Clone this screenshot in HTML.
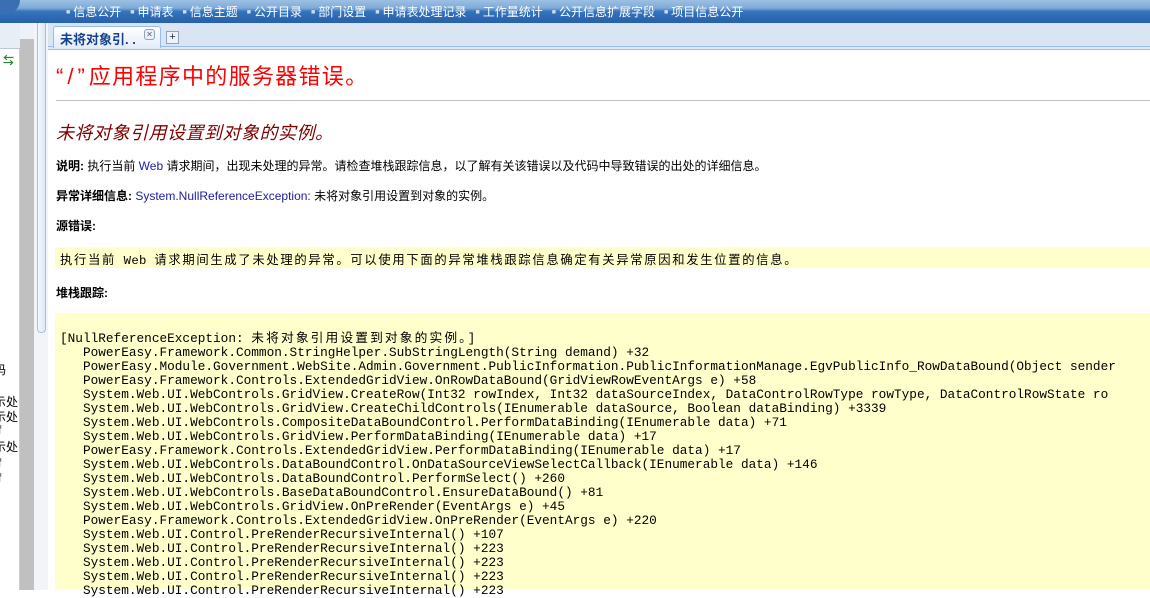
<!DOCTYPE html>
<html><head><meta charset="utf-8"><style>
*{margin:0;padding:0;box-sizing:border-box}
body{width:1150px;height:590px;overflow:hidden;background:#fff;font-family:"Liberation Sans","Noto Sans CJK SC",sans-serif;position:relative}
.top{position:absolute;left:0;top:0;width:1150px;height:23px;background:linear-gradient(#9cc0e4 0,#7eaad8 35%,#3473bd 50%,#2760ab 100%)}
.nav{position:absolute;left:66px;top:3px;color:#fff;font-size:12px;white-space:nowrap}
.nav span{margin-right:9px}
.nav b{font-weight:normal;font-size:7px;color:#cde;margin-right:3px;vertical-align:2px}
.orb{position:absolute;left:0;top:0;width:20px;height:14px;border-bottom-right-radius:20px;background:#3a6fb4}
.left{position:absolute;left:0;top:23px;width:20px;height:567px;background:#fff;border-right:1px solid #ccc}
.lhead{position:absolute;left:0;top:23px;width:20px;height:26px;background:#e8eef6;border-bottom:1px solid #b8c8dc}
.sb{position:absolute;left:20px;top:23px;width:14px;height:567px;background:#c0c0c0}
.sbtop{position:absolute;left:20px;top:23px;width:14px;height:16px;background:#eef2f8}
.sp{position:absolute;left:34px;top:23px;width:14px;height:567px;background:#f2f4f7}
.spbar{position:absolute;left:37px;top:23px;width:9px;height:310px;background:linear-gradient(90deg,#f4f8fd,#dce8f6);border:1px solid #a8c0dc;border-top:none;border-radius:0 0 4px 4px}
.tabs{position:absolute;left:48px;top:23px;width:1102px;height:24px;background:#d9e5f3;border-bottom:1px solid #99bbe8}
.tabs2{position:absolute;left:48px;top:47px;width:1102px;height:3px;background:#dfe9f6;border-bottom:1px solid #99bbe8}
.tab{position:absolute;left:53px;top:26px;width:108px;height:22px;background:linear-gradient(#fff,#e3ecf8);border:1px solid #99bbe8;border-bottom:none;border-radius:3px 3px 0 0;font-size:13px;font-weight:bold;color:#15428b;padding:2px 0 0 6px}
.x{position:absolute;left:144px;top:29px;width:11px;height:11px;border:1px solid #8aa4c4;border-radius:3px;font-size:8px;line-height:9px;text-align:center;color:#567;background:#eef}
.plus{position:absolute;left:166px;top:31px;width:13px;height:13px;border:1px solid #8aa4c4;background:#eef3fa;font-size:11px;line-height:11px;text-align:center;color:#234}
.c{position:absolute;left:56px;color:#000}
h1{position:absolute;left:56px;top:59px;font-size:22px;letter-spacing:1.3px;font-weight:normal;color:#f00;white-space:nowrap}
h1 .q{letter-spacing:4px}
.hr{position:absolute;left:56px;top:100px;width:1094px;height:1px;background:#c0c0c0}
h2{position:absolute;left:56px;top:119px;font-size:18px;letter-spacing:0.5px;font-weight:normal;font-style:italic;color:#800000;white-space:nowrap}
.p{font-size:12px;white-space:nowrap}
.p b{font-weight:bold}
.blue{color:#2020a0}
.src{position:absolute;left:55px;top:247px;width:1095px;height:21px;background:#ffffcc;font-family:"Liberation Mono","Noto Sans CJK SC",monospace;font-size:12.3px;letter-spacing:0.3px;padding:3px 0 0 5px;white-space:nowrap}
.src .cj{letter-spacing:1.7px}
.stack{position:absolute;left:55px;top:313px;width:1095px;height:277px;background:#ffffcc}
.pre{position:absolute;left:60px;top:332px;font-family:"Liberation Mono","Noto Sans CJK SC",monospace;font-size:12.75px;color:#000}
.pre div{height:14px;line-height:14px;white-space:pre}
.cj{letter-spacing:2.1px}
.ltxt{position:absolute;left:0;font-size:12px;color:#000;white-space:nowrap}
</style></head><body>
<div class="top"><div class="orb"></div>
<div class="nav"><b>■</b><span>信息公开</span><b>■</b><span>申请表</span><b>■</b><span>信息主题</span><b>■</b><span>公开目录</span><b>■</b><span>部门设置</span><b>■</b><span>申请表处理记录</span><b>■</b><span>工作量统计</span><b>■</b><span>公开信息扩展字段</span><b>■</b><span>项目信息公开</span></div></div>
<div class="left"></div><div class="lhead"></div>
<div class="ltxt" style="top:52px;left:3px;color:#2a8a2a;font-weight:bold;font-size:11px">⇆</div>
<div class="ltxt" style="top:361px;left:-6px">码</div>
<div class="ltxt" style="top:393px;left:-6px">示处</div>
<div class="ltxt" style="top:408px;left:-6px">示处</div>
<div class="ltxt" style="top:423px;left:-2px">f</div>
<div class="ltxt" style="top:438px;left:-6px">示处</div>
<div class="ltxt" style="top:456px;left:-2px">f</div>
<div class="ltxt" style="top:471px;left:-2px">f</div>
<div class="sb"></div><div class="sbtop"></div>
<div class="sp"></div><div class="spbar"></div>
<div class="tabs"></div><div class="tabs2"></div>
<div class="tab">未将对象引. .</div><div class="x">✕</div><div class="plus">+</div>
<h1><span class="q">“/”</span>应用程序中的服务器错误。</h1>
<div class="hr"></div>
<h2>未将对象引用设置到对象的实例。</h2>
<div class="c p" style="top:157px"><b>说明:</b> 执行当前 <span class="blue">Web</span> 请求期间，出现未处理的异常。请检查堆栈跟踪信息，以了解有关该错误以及代码中导致错误的出处的详细信息。</div>
<div class="c p" style="top:187px"><b>异常详细信息:</b> <span class="blue">System.NullReferenceException:</span> 未将对象引用设置到对象的实例。</div>
<div class="c p" style="top:217px"><b>源错误:</b></div>
<div class="src"><span class="cj">执行当前</span> Web <span class="cj">请求期间生成了未处理的异常。可以使用下面的异常堆栈跟踪信息确定有关异常原因和发生位置的信息。</span></div>
<div class="c p" style="top:284px"><b>堆栈跟踪:</b></div>
<div class="stack"></div>
<div class="pre"><div>[NullReferenceException: <span class="cj">未将对象引用设置到对象的实例。</span>]</div><div>   PowerEasy.Framework.Common.StringHelper.SubStringLength(String demand) +32</div><div>   PowerEasy.Module.Government.WebSite.Admin.Government.PublicInformation.PublicInformationManage.EgvPublicInfo_RowDataBound(Object sender</div><div>   PowerEasy.Framework.Controls.ExtendedGridView.OnRowDataBound(GridViewRowEventArgs e) +58</div><div>   System.Web.UI.WebControls.GridView.CreateRow(Int32 rowIndex, Int32 dataSourceIndex, DataControlRowType rowType, DataControlRowState ro</div><div>   System.Web.UI.WebControls.GridView.CreateChildControls(IEnumerable dataSource, Boolean dataBinding) +3339</div><div>   System.Web.UI.WebControls.CompositeDataBoundControl.PerformDataBinding(IEnumerable data) +71</div><div>   System.Web.UI.WebControls.GridView.PerformDataBinding(IEnumerable data) +17</div><div>   PowerEasy.Framework.Controls.ExtendedGridView.PerformDataBinding(IEnumerable data) +17</div><div>   System.Web.UI.WebControls.DataBoundControl.OnDataSourceViewSelectCallback(IEnumerable data) +146</div><div>   System.Web.UI.WebControls.DataBoundControl.PerformSelect() +260</div><div>   System.Web.UI.WebControls.BaseDataBoundControl.EnsureDataBound() +81</div><div>   System.Web.UI.WebControls.GridView.OnPreRender(EventArgs e) +45</div><div>   PowerEasy.Framework.Controls.ExtendedGridView.OnPreRender(EventArgs e) +220</div><div>   System.Web.UI.Control.PreRenderRecursiveInternal() +107</div><div>   System.Web.UI.Control.PreRenderRecursiveInternal() +223</div><div>   System.Web.UI.Control.PreRenderRecursiveInternal() +223</div><div>   System.Web.UI.Control.PreRenderRecursiveInternal() +223</div><div>   System.Web.UI.Control.PreRenderRecursiveInternal() +223</div></div>
</body></html>
